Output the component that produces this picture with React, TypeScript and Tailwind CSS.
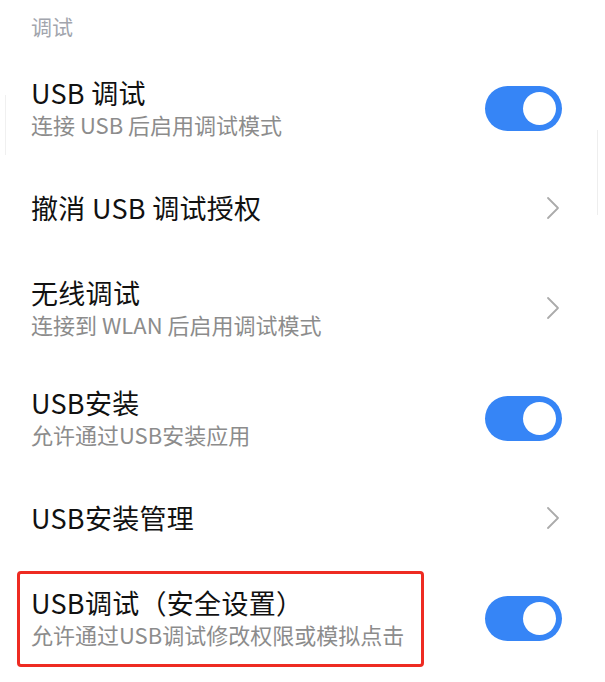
import React from "react";

const font = { fontFamily: '"Noto Sans CJK SC", "Noto Sans", sans-serif' };

function Toggle() {
  return (
    <div className="w-[77px] h-[45px] rounded-full bg-[#3685f6] flex items-center justify-end pr-[6px] shrink-0">
      <div className="w-[33px] h-[33px] rounded-full bg-white" />
    </div>
  );
}

function Chevron() {
  return (
    <svg width="14" height="24" viewBox="0 0 14 24" className="shrink-0 mr-[2px]">
      <path d="M2 2 L12 12 L2 22" fill="none" stroke="#ababab" strokeWidth="1.8" strokeLinecap="round" strokeLinejoin="round" />
    </svg>
  );
}

function Row({
  title,
  sub,
  right,
  children,
}: {
  title: string;
  sub?: string;
  right: "toggle" | "chevron";
  children?: React.ReactNode;
}) {
  return (
    <div className={`relative flex items-center justify-between pl-[31px] pr-[43px] ${sub ? "h-[110px]" : "h-[90px]"}`}>
      <div className="flex flex-col">
        <div className="text-[27px] leading-[32px] tracking-[0.3px] text-[#111111]">{title}</div>
        {sub && <div className="text-[22px] leading-[30px] text-[#8c8c8c]">{sub}</div>}
      </div>
      {right === "toggle" ? <Toggle /> : <Chevron />}
      {children}
    </div>
  );
}

export default function App() {
  return (
    <div className="relative w-[605px] h-[682px] bg-white overflow-hidden" style={font}>
      <div className="h-[53px] pl-[31px] pt-[10px] text-[21px] leading-[32px] text-[#a2a5ad]">调试</div>
      <Row title="USB 调试" sub="连接 USB 后启用调试模式" right="toggle" />
      <Row title="撤消 USB 调试授权" right="chevron" />
      <Row title="无线调试" sub="连接到 WLAN 后启用调试模式" right="chevron" />
      <Row title="USB安装" sub="允许通过USB安装应用" right="toggle" />
      <Row title="USB安装管理" right="chevron" />
      <Row title="USB调试（安全设置）" sub="允许通过USB调试修改权限或模拟点击" right="toggle">
        <div className="absolute left-[17px] top-[8px] w-[407px] h-[96px] border-[3px] border-[#ee2b22] rounded-[4px] pointer-events-none" />
      </Row>
      <div className="absolute left-[5px] top-[95px] w-px h-[60px] bg-[#f0f0f0]" />
      <div className="absolute left-[597px] top-[130px] w-px h-[85px] bg-[#eeeeee]" />
    </div>
  );
}
